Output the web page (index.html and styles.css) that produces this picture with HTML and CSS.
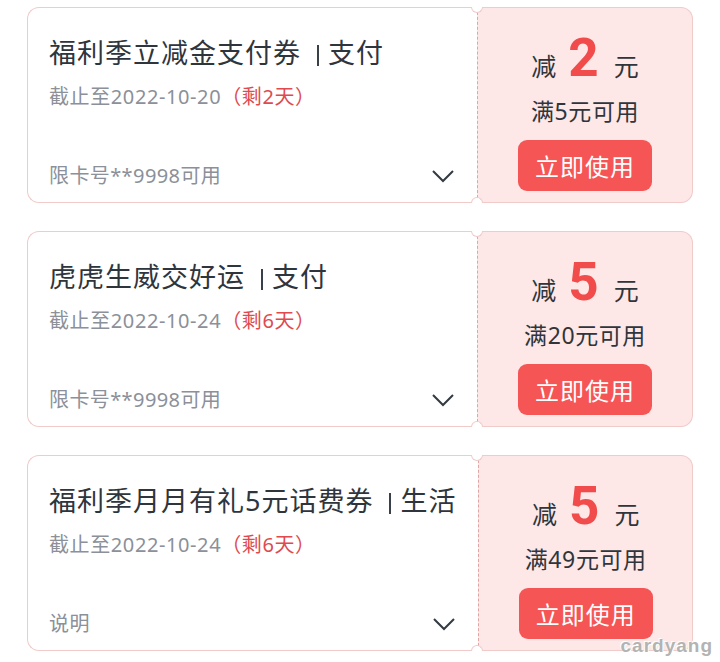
FILE: index.html
```html
<!DOCTYPE html>
<html>
<head>
    <meta charset="utf-8">
    <title>我的优惠券</title>
    <link rel="stylesheet" href="styles.css">
</head>
<body>
    <div class="list">
        <div class="coupon">
            <div class="coupon-info">
                <div class="title">福利季立减金支付券<span class="sep"></span>支付</div>
                <div class="date">截止至2022-10-20<span class="days">（剩2天）</span></div>
                <div class="foot">
                    <span>限卡号**9998可用</span>
                    <svg class="arrow" width="24" height="14" viewBox="0 0 24 14"><path d="M2 2 L12 12 L22 2" fill="none" stroke="#333a42" stroke-width="2"/></svg>
                </div>
            </div>
            <div class="coupon-action">
                <div class="amount">减<b>2</b>元</div>
                <div class="cond">满5元可用</div>
                <button class="use">立即使用</button>
            </div>
            <span class="notch notch-top"></span>
            <span class="notch notch-bottom"></span>
        </div>

        <div class="coupon">
            <div class="coupon-info">
                <div class="title">虎虎生威交好运<span class="sep"></span>支付</div>
                <div class="date">截止至2022-10-24<span class="days">（剩6天）</span></div>
                <div class="foot">
                    <span>限卡号**9998可用</span>
                    <svg class="arrow" width="24" height="14" viewBox="0 0 24 14"><path d="M2 2 L12 12 L22 2" fill="none" stroke="#333a42" stroke-width="2"/></svg>
                </div>
            </div>
            <div class="coupon-action">
                <div class="amount">减<b>5</b>元</div>
                <div class="cond">满20元可用</div>
                <button class="use">立即使用</button>
            </div>
            <span class="notch notch-top"></span>
            <span class="notch notch-bottom"></span>
        </div>

        <div class="coupon">
            <div class="coupon-info">
                <div class="title">福利季月月有礼5元话费券<span class="sep"></span>生活</div>
                <div class="date">截止至2022-10-24<span class="days">（剩6天）</span></div>
                <div class="foot">
                    <span>说明</span>
                    <svg class="arrow" width="24" height="14" viewBox="0 0 24 14"><path d="M2 2 L12 12 L22 2" fill="none" stroke="#333a42" stroke-width="2"/></svg>
                </div>
            </div>
            <div class="coupon-action">
                <div class="amount">减<b>5</b>元</div>
                <div class="cond">满49元可用</div>
                <button class="use">立即使用</button>
            </div>
            <span class="notch notch-top"></span>
            <span class="notch notch-bottom"></span>
        </div>
    </div>

    <div class="mark">cardyang</div>
</body>
</html>
```

FILE: styles.css
```css
* {
    box-sizing: border-box;
}

body {
    margin: 0;
    background-color: #fff;
    font-family: "Noto Sans", "Noto Sans CJK SC", sans-serif;
    position: relative;
}

/* Lista de cupones */
.list {
    display: flex;
    flex-direction: column;
    gap: 28px;
    padding: 7px 27px 11px;
}

.coupon {
    display: flex;
    height: 196px;
    position: relative;
}

/* Parte izquierda */
.coupon-info {
    flex: 1;
    display: flex;
    flex-direction: column;
    padding: 27px 22px 12px 21px;
    border: 1px solid #f1caca;
    border-right: none;
    border-radius: 12px 0 0 12px;
    background-color: #fff;
}

.title {
    font-size: 27px;
    line-height: 36px;
    color: #2f353c;
    letter-spacing: 1px;
    white-space: nowrap;
}

.sep {
    display: inline-block;
    width: 2px;
    height: 21px;
    background-color: #3a4048;
    margin: 0 9px 0 16px;
    vertical-align: -3px;
}

.date {
    margin-top: 12px;
    font-size: 20px;
    line-height: 28px;
    letter-spacing: 0.6px;
    color: #8b9099;
}

.days {
    color: #e04a4f;
}

.foot {
    margin-top: auto;
    display: flex;
    justify-content: space-between;
    align-items: center;
    font-size: 20px;
    line-height: 28px;
    letter-spacing: 0.4px;
    color: #8b9099;
}

.arrow {
    display: block;
}

/* Parte derecha */
.coupon-action {
    width: 216px;
    display: flex;
    flex-direction: column;
    align-items: center;
    padding-top: 22px;
    background-color: #fde7e7;
    border: 1px solid #f1caca;
    border-left: 1px dashed #dfa5a5;
    border-radius: 0 12px 12px 0;
}

.amount {
    display: flex;
    align-items: baseline;
    height: 56px;
    line-height: 56px;
    font-size: 25px;
    color: #2f353c;
}

.amount b {
    font-family: Roboto, "Liberation Sans", sans-serif;
    font-weight: bold;
    font-size: 53px;
    color: #f14b4b;
    margin: 0 15px 0 12px;
}

.cond {
    margin-top: 9px;
    font-size: 23px;
    line-height: 32px;
    letter-spacing: 0.6px;
    color: #2f353c;
}

.use {
    margin-top: 13px;
    width: 134px;
    height: 51px;
    border: none;
    border-radius: 9px;
    background-color: #f65555;
    color: #fff;
    font-family: inherit;
    font-size: 24px;
    letter-spacing: 1px;
    cursor: pointer;
}

/* Muescas del corte */
.notch {
    position: absolute;
    left: 444px;
    width: 12px;
    height: 6px;
    background-color: #fff;
    border: 1px solid #f1caca;
}

.notch-top {
    top: 0;
    border-top: none;
    border-radius: 0 0 6px 6px;
}

.notch-bottom {
    bottom: 0;
    border-bottom: none;
    border-radius: 6px 6px 0 0;
}

/* Marca de agua */
.mark {
    position: absolute;
    right: 7px;
    bottom: 5px;
    font-family: "Liberation Sans", sans-serif;
    font-weight: bold;
    font-size: 19px;
    line-height: 22px;
    letter-spacing: 1px;
    color: #b3b3b3;
    text-shadow: 1px 1px 0 #fff, -1px -1px 0 #fff;
}
```
